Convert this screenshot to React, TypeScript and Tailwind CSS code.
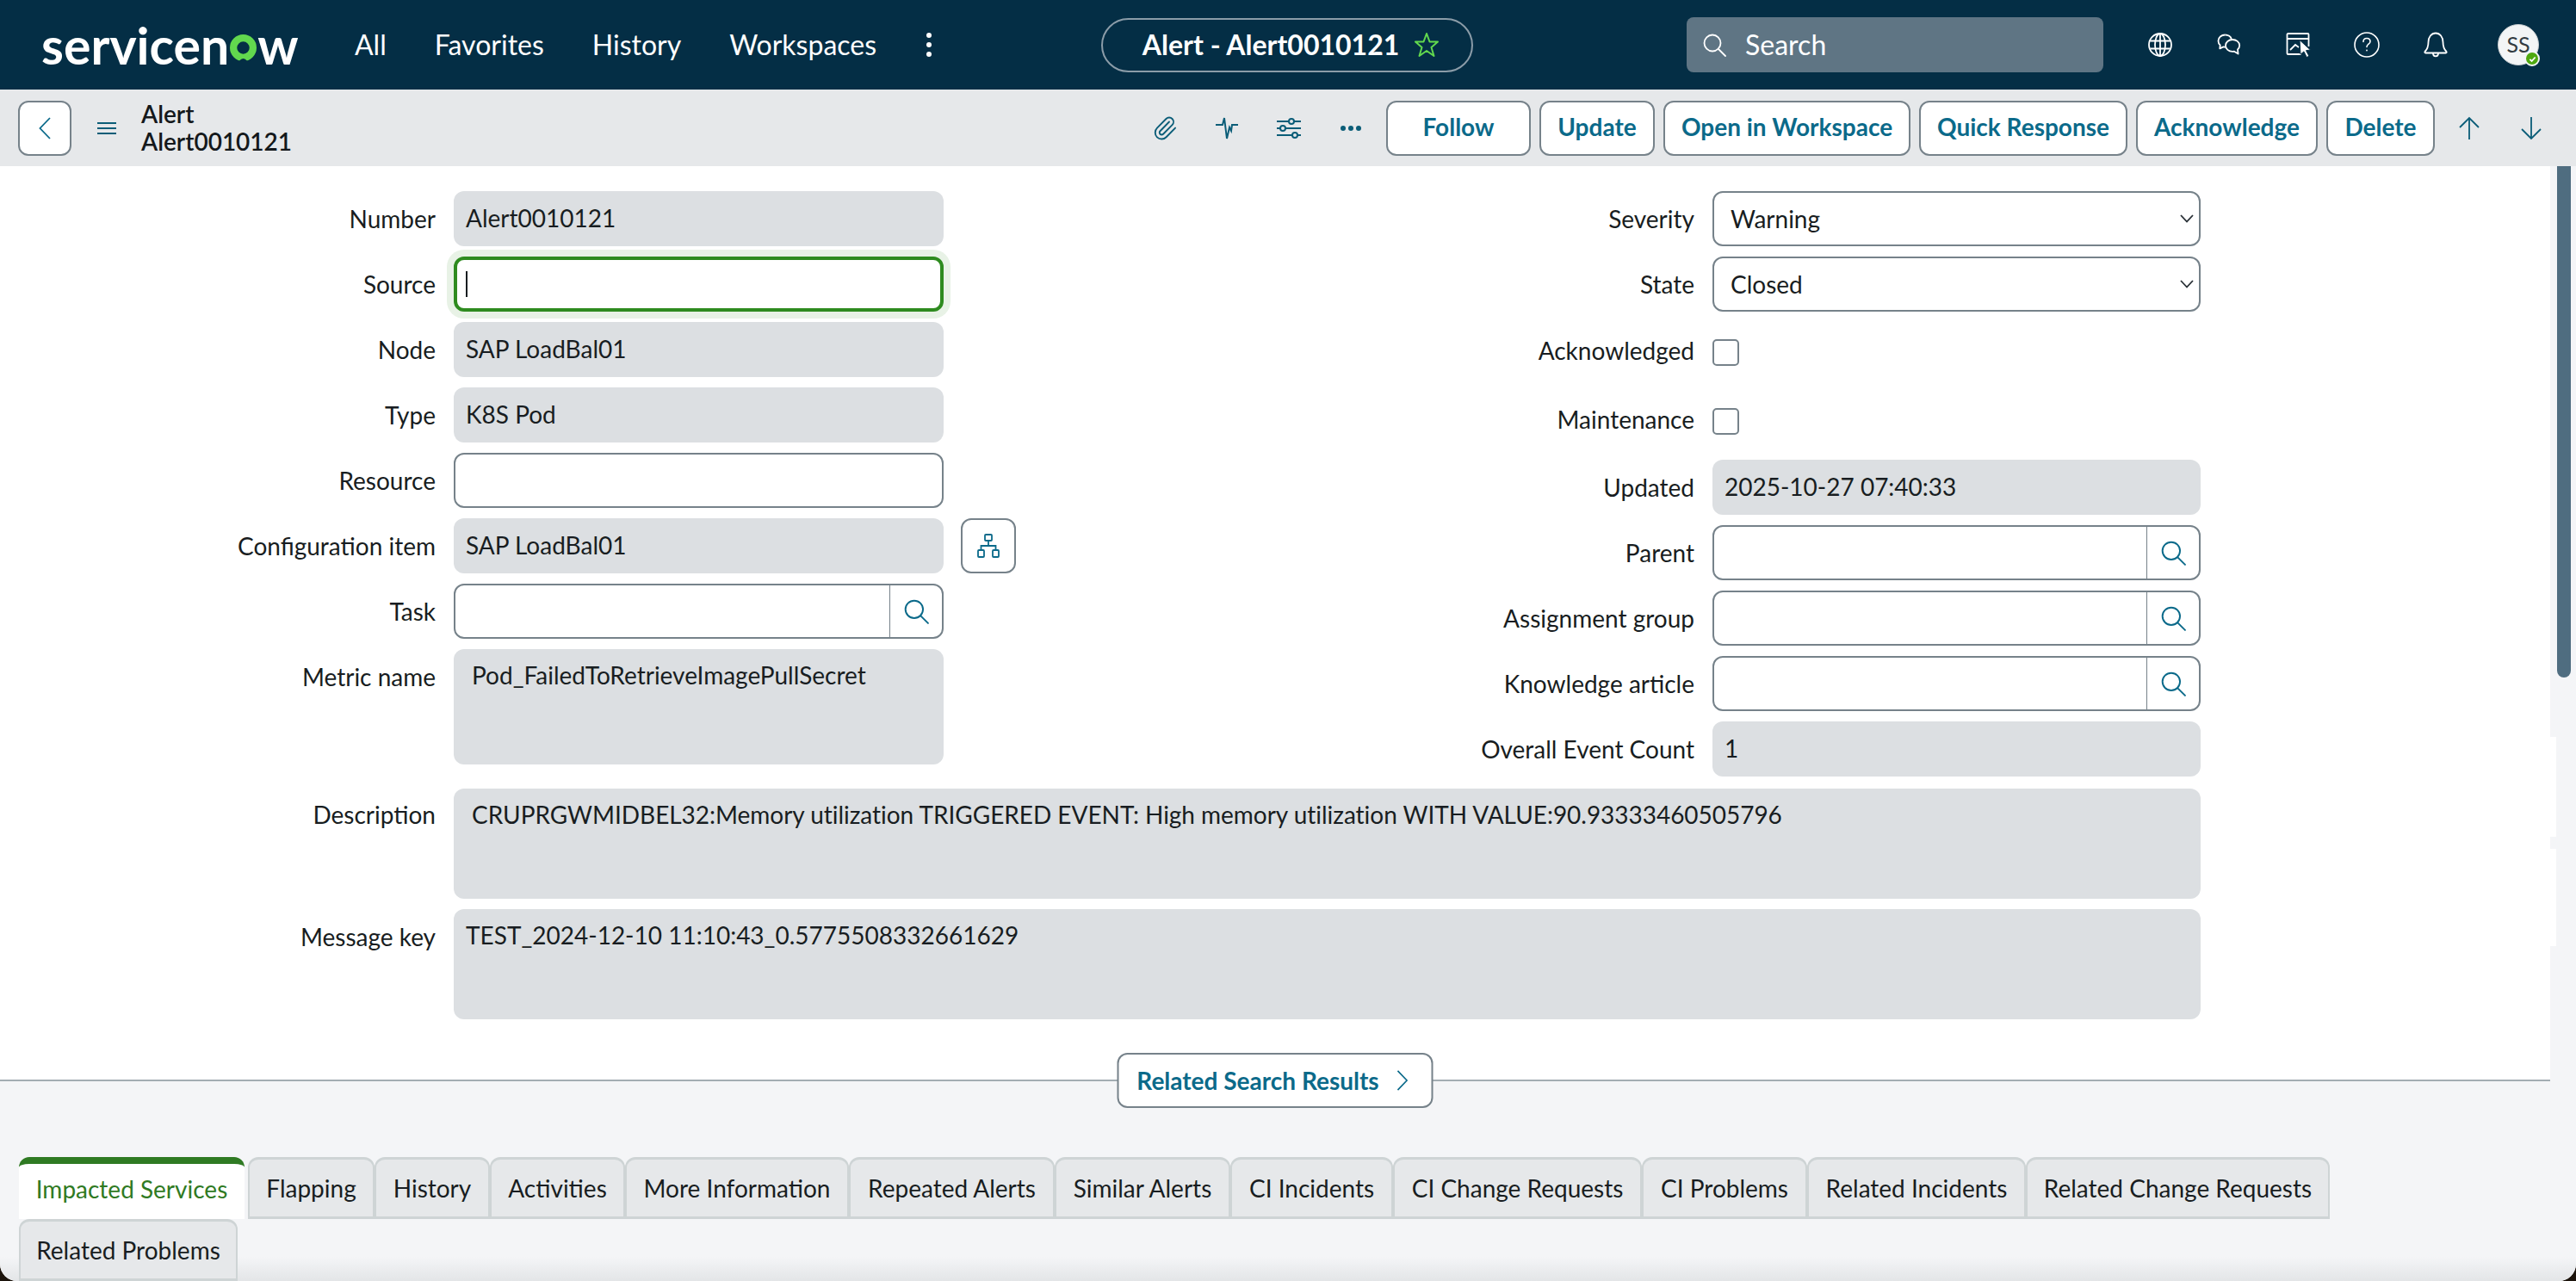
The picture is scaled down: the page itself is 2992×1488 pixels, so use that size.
import React from "react";
import { Paperclip } from "lucide-react";

const NAV = ["All", "Favorites", "History", "Workspaces"];

const ACTIONS = [
  { label: "Follow", width: "w-[168px]" },
  { label: "Update", width: "w-[134px]" },
  { label: "Open in Workspace", width: "w-[287px]" },
  { label: "Quick Response", width: "w-[242px]" },
  { label: "Acknowledge", width: "w-[211px]" },
  { label: "Delete", width: "w-[126px]" },
];

const TABS = [
  { label: "Impacted Services", width: "w-[262px]", active: true },
  { label: "Flapping", width: "w-[147px]" },
  { label: "History", width: "w-[134px]" },
  { label: "Activities", width: "w-[157px]" },
  { label: "More Information", width: "w-[260px]" },
  { label: "Repeated Alerts", width: "w-[239px]" },
  { label: "Similar Alerts", width: "w-[204px]" },
  { label: "CI Incidents", width: "w-[189px]" },
  { label: "CI Change Requests", width: "w-[289px]" },
  { label: "CI Problems", width: "w-[192px]" },
  { label: "Related Incidents", width: "w-[254px]" },
  { label: "Related Change Requests", width: "w-[353px]" },
  { label: "Related Problems", width: "w-[254px]" },
];

const SearchIcon = ({ className = "" }: { className?: string }) => (
  <svg viewBox="0 0 28 28" fill="none" stroke="currentColor" strokeWidth="1.8" className={className}>
    <circle cx="12" cy="12" r="9.5" />
    <path d="M19 19l8 8" strokeLinecap="round" />
  </svg>
);

const Logo = () => (
  <div className="flex items-center text-[59px] font-bold leading-none text-white">
    <span>servicen</span>
    <svg viewBox="0 0 30 30" className="mx-[1px] mt-[6px] h-[31px] w-[31px]">
      <circle cx="15" cy="15" r="11" fill="none" stroke="#62d84e" strokeWidth="8" />
      <path d="M10 30.5Q15 23.5 20 30.5z" fill="#042e45" />
    </svg>
    <span>w</span>
  </div>
);

const HeaderIcons = () => (
  <div className="ml-[26px] flex items-center text-white">
    <div className="flex w-[80px] justify-center">
      <svg viewBox="0 0 28 28" fill="none" stroke="currentColor" strokeWidth="1.8" className="h-[28px] w-[28px]">
        <circle cx="14" cy="14" r="13" />
        <ellipse cx="14" cy="14" rx="6" ry="13" />
        <path d="M14 1v26M2.5 9.5h23M2.5 18.5h23" />
      </svg>
    </div>
    <div className="flex w-[80px] justify-center">
      <svg viewBox="0 0 28 26" fill="none" stroke="currentColor" strokeWidth="1.8" strokeLinejoin="round" className="h-[26px] w-[28px]">
        <path d="M9.5 1.5c-4.4 0-8 3-8 7 0 2 .8 3.6 2.2 4.9l-.4 4 4.2-2c1 .3 1.6.3 2.4.2" />
        <path d="M9.5 1.5c3.4 0 6.6 2 7.4 5" />
        <path d="M18 7c4.4 0 8.2 2.7 8.2 6.8 0 2-.8 3.6-2.2 4.7l.6 5-4.6-2.8c-.6.1-1.3.2-2 .2-4.4 0-8-3-8-7 0-4 3.6-6.9 8-6.9z" />
      </svg>
    </div>
    <div className="flex w-[80px] justify-center">
      <svg viewBox="0 0 30 30" fill="none" stroke="currentColor" strokeWidth="1.8" className="ml-[2px] h-[30px] w-[30px]">
        <path d="M18 26H2.5a1 1 0 0 1-1-1V3a1 1 0 0 1 1-1h23a1 1 0 0 1 1 1v14" />
        <path d="M1.5 8h25M5 21l6-6 4 3" />
        <path d="M16 9.5l12.5 11.5-5 .7 3.5 6.5-2.8 1.3-3.3-6.6-3.9 3.4z" fill="#fff" stroke="#042e45" strokeWidth="1" />
      </svg>
    </div>
    <div className="flex w-[80px] justify-center">
      <svg viewBox="0 0 30 30" fill="none" stroke="currentColor" strokeWidth="1.6" className="h-[30px] w-[30px]">
        <circle cx="15" cy="15" r="14" />
        <path d="M11 11.5c0-2.5 1.8-4 4-4s4 1.500 4 3.700c0 3-4 3-4 6.300" strokeLinecap="round" />
        <circle cx="15" cy="21.500" r="0.900" fill="currentColor" stroke="none" />
      </svg>
    </div>
    <div className="flex w-[80px] justify-center">
      <svg viewBox="0 0 28 30" fill="none" stroke="currentColor" strokeWidth="1.8" strokeLinejoin="round" className="h-[30px] w-[28px]">
        <path d="M5.500 12c0-6 3.500-10.500 8.500-10.500S22.500 6 22.500 12c0 5 1 8 4 11 .5.600.2 1.500-.7 1.500H2.200c-.9 0-1.200-.9-.7-1.500 3-3 4-6 4-11z" />
        <path d="M11 25c0 2 1.300 3.300 3 3.300s3-1.300 3-3.300" />
      </svg>
    </div>
    <div className="relative ml-[32px] flex h-[48px] w-[48px] items-center justify-center rounded-full border border-[#c9ced1] bg-[#f3f5f6] text-[25px] text-[#333c42]">
      SS
      <div className="absolute bottom-[-2px] right-[-2px] flex h-[18px] w-[18px] items-center justify-center rounded-full border-2 border-[#f3f5f6] bg-[#4ea80f]">
        <svg viewBox="0 0 10 10" fill="none" stroke="#fff" strokeWidth="2" className="h-[9px] w-[9px]">
          <path d="M1.500 5.500l2.500 2.300 4.500-5" />
        </svg>
      </div>
    </div>
  </div>
);

const Header = () => (
  <header className="flex h-[104px] shrink-0 items-center bg-[#042e45] pl-[48px] text-white">
    <div className="w-[364px]">
      <Logo />
    </div>
    <nav className="flex items-center gap-[56px] text-[32px]">
      {NAV.map((item) => (
        <span key={item}>{item}</span>
      ))}
    </nav>
    <div className="ml-[53px] flex w-[16px] flex-col items-center gap-[5px]">
      <span className="h-[6px] w-[6px] rounded-full bg-white" />
      <span className="h-[6px] w-[6px] rounded-full bg-white" />
      <span className="h-[6px] w-[6px] rounded-full bg-white" />
    </div>
    <div className="ml-[192px] flex h-[63px] w-[432px] items-center justify-center gap-[18px] rounded-full border-2 border-[#8b9ca8] pl-[8px] text-[32px] font-bold">
      <span>Alert - Alert0010121</span>
      <svg viewBox="0 0 28 30" fill="none" stroke="#62d84e" strokeWidth="2" strokeLinejoin="round" className="h-[30px] w-[28px]">
        <path d="M14 2l3.500 9.500H27l-7.500 6.500L22.500 28 14 22l-8.500 6L8.500 18 1 11.500h9.500z" />
      </svg>
    </div>
    <div className="ml-[248px] flex h-[64px] w-[484px] items-center gap-[22px] rounded-lg bg-[#5f7584] pl-[18px] text-[32px]">
      <SearchIcon className="h-[28px] w-[28px]" />
      <span>Search</span>
    </div>
    <HeaderIcons />
  </header>
);

const ToolIcon = ({ children }: { children: React.ReactNode }) => (
  <div className="flex w-[72px] items-center justify-center text-[#0b5d78]">{children}</div>
);

const Toolbar = () => (
  <div className="flex h-[89px] shrink-0 items-center bg-[#e6e8ea] pl-[21px] pr-[16px]">
    <button className="flex h-[64px] w-[62px] items-center justify-center rounded-xl border-2 border-[#76828a] bg-white text-[#0b6a8a]">
      <svg viewBox="0 0 14 26" fill="none" stroke="currentColor" strokeWidth="1.8" className="h-[26px] w-[14px]">
        <path d="M13 1L1.500 13 13 25" />
      </svg>
    </button>
    <div className="ml-[30px] flex w-[22px] flex-col gap-[4px]">
      <span className="h-[2px] bg-[#0b5d78]" />
      <span className="h-[2px] bg-[#0b5d78]" />
      <span className="h-[2px] bg-[#0b5d78]" />
    </div>
    <div className="ml-[29px] pb-[2px] text-[28px] font-semibold leading-[32px] text-[#14181b]">
      <div>Alert</div>
      <div>Alert0010121</div>
    </div>
    <div className="ml-auto flex items-center">
      <ToolIcon>
        <Paperclip size={30} strokeWidth={1.5} />
      </ToolIcon>
      <ToolIcon>
        <svg viewBox="0 0 28 28" fill="none" stroke="currentColor" strokeWidth="2" className="h-[28px] w-[28px]">
          <path d="M1 10h8l2-8 3 24 3-13 2 4 1-7h7" />
        </svg>
      </ToolIcon>
      <ToolIcon>
        <svg viewBox="0 0 28 28" fill="none" stroke="currentColor" strokeWidth="2" className="h-[28px] w-[28px]">
          <path d="M0 6h14M20 6h8M0 14h4M10 14h18M0 22h18M24 22h4" />
          <circle cx="17" cy="6" r="3" />
          <circle cx="7" cy="14" r="3" />
          <circle cx="21" cy="22" r="3" />
        </svg>
      </ToolIcon>
      <ToolIcon>
        <svg viewBox="0 0 24 6" fill="currentColor" className="h-[6px] w-[24px]">
          <circle cx="3" cy="3" r="3" />
          <circle cx="12" cy="3" r="3" />
          <circle cx="21" cy="3" r="3" />
        </svg>
      </ToolIcon>
      <div className="ml-[5px] flex items-center gap-[10px]">
        {ACTIONS.map((action) => (
          <button
            key={action.label}
            className={`h-[64px] ${action.width} rounded-xl border-2 border-[#76828a] bg-white pb-[3px] text-[28px] font-bold text-[#0b6a8a]`}
          >
            {action.label}
          </button>
        ))}
      </div>
      <div className="ml-[4px] flex">
        <ToolIcon>
          <svg viewBox="0 0 26 28" fill="none" stroke="currentColor" strokeWidth="1.8" className="h-[28px] w-[26px]">
            <path d="M13 27V2M2 13L13 2l11 11" />
          </svg>
        </ToolIcon>
        <ToolIcon>
          <svg viewBox="0 0 26 28" fill="none" stroke="currentColor" strokeWidth="1.8" className="h-[28px] w-[26px]">
            <path d="M13 1v25M2 15l11 11 11-11" />
          </svg>
        </ToolIcon>
      </div>
    </div>
  </div>
);

const Label = ({ text, className = "w-[506px]" }: { text: string; className?: string }) => (
  <label className={`${className} shrink-0 text-right text-[28px] leading-[64px] text-[#181d21]`}>{text}</label>
);

const ReadOnly = ({ value, className = "w-[569px] h-16" }: { value: string; className?: string }) => (
  <div className={`${className} rounded-xl bg-[#dcdfe2] px-[14px] text-[28px] leading-[62px] text-[#181d21]`}>{value}</div>
);

const TextInput = () => (
  <input readOnly className="h-16 w-[569px] rounded-xl border-2 border-[#76828a] bg-white px-[14px] outline-none" />
);

const Lookup = ({ className }: { className: string }) => (
  <div className={`${className} flex h-16 overflow-hidden rounded-xl border-2 border-[#76828a] bg-white`}>
    <input readOnly className="min-w-0 flex-1 outline-none" />
    <div className="flex w-[61px] items-center justify-center border-l border-[#76828a] text-[#0b6a8a]">
      <SearchIcon className="h-[30px] w-[30px]" />
    </div>
  </div>
);

const SelectField = ({ value }: { value: string }) => (
  <div className="relative h-16 w-[567px]">
    <select
      defaultValue={value}
      className="h-full w-full appearance-none rounded-xl border-2 border-[#76828a] bg-white pl-[19px] text-[28px] text-[#181d21] outline-none"
    >
      <option>{value}</option>
    </select>
    <svg viewBox="0 0 16 10" fill="none" stroke="#2a3137" strokeWidth="1.8" className="absolute right-[8px] top-[27px] h-[10px] w-[16px]">
      <path d="M1 1l7 7.500L15 1" />
    </svg>
  </div>
);

const Checkbox = () => <span className="mt-[2px] block h-[31px] w-[31px] rounded-[5px] border-2 border-[#76828a] bg-white" />;

const Row = ({ children }: { children: React.ReactNode }) => <div className="flex items-start gap-[21px]">{children}</div>;

const RightRow = ({ text, children }: { text: string; children: React.ReactNode }) => (
  <div className="flex items-start gap-[21px]">
    <Label text={text} className="w-[768px]" />
    {children}
  </div>
);

const CheckRow = ({ text }: { text: string }) => (
  <div className="flex h-[68px] items-center gap-[21px]">
    <label className="w-[768px] shrink-0 pb-[3px] text-right text-[28px] text-[#181d21]">{text}</label>
    <Checkbox />
  </div>
);

const Form = () => (
  <div className="pt-[29px]">
    <div className="flex">
      <div className="flex w-[1200px] shrink-0 flex-col gap-[12px]">
        <Row>
          <Label text="Number" />
          <ReadOnly value="Alert0010121" />
        </Row>
        <Row>
          <Label text="Source" />
          <div className="flex h-16 w-[569px] items-center rounded-xl border-4 border-[#2e8b1f] bg-white pl-[10px] ring-[8px] ring-[#e8f2e6]">
            <span className="h-[30px] w-[2px] bg-[#181d21]" />
          </div>
        </Row>
        <Row>
          <Label text="Node" />
          <ReadOnly value="SAP LoadBal01" />
        </Row>
        <Row>
          <Label text="Type" />
          <ReadOnly value="K8S Pod" />
        </Row>
        <Row>
          <Label text="Resource" />
          <TextInput />
        </Row>
        <Row>
          <Label text="Configuration item" />
          <ReadOnly value="SAP LoadBal01" />
          <button className="-ml-px flex h-16 w-[64px] items-center justify-center rounded-xl border-2 border-[#76828a] bg-white text-[#0b6a8a]">
            <svg viewBox="0 0 28 28" fill="none" stroke="currentColor" strokeWidth="1.8" className="h-[28px] w-[28px]">
              <rect x="10" y="1" width="8" height="7" rx="1" />
              <rect x="2" y="19" width="7" height="8" rx="1" />
              <rect x="19" y="19" width="7" height="8" rx="1" />
              <path d="M14 8v6M5.500 19v-5h17v5" />
            </svg>
          </button>
        </Row>
        <Row>
          <Label text="Task" />
          <Lookup className="w-[569px]" />
        </Row>
        <Row>
          <Label text="Metric name" />
          <div className="h-[134px] w-[569px] rounded-xl bg-[#dcdfe2] px-[21px] text-[28px] leading-[60px] text-[#181d21]">
            Pod_FailedToRetrieveImagePullSecret
          </div>
        </Row>
      </div>
      <div className="flex flex-col gap-[12px]">
        <RightRow text="Severity">
          <SelectField value="Warning" />
        </RightRow>
        <RightRow text="State">
          <SelectField value="Closed" />
        </RightRow>
        <CheckRow text="Acknowledged" />
        <CheckRow text="Maintenance" />
        <RightRow text="Updated">
          <ReadOnly value="2025-10-27 07:40:33" className="h-16 w-[567px]" />
        </RightRow>
        <RightRow text="Parent">
          <Lookup className="w-[567px]" />
        </RightRow>
        <RightRow text="Assignment group">
          <Lookup className="w-[567px]" />
        </RightRow>
        <RightRow text="Knowledge article">
          <Lookup className="w-[567px]" />
        </RightRow>
        <RightRow text="Overall Event Count">
          <ReadOnly value="1" className="h-16 w-[567px]" />
        </RightRow>
      </div>
    </div>
    <div className="mt-[14px] flex flex-col gap-[12px]">
      <Row>
        <label className="w-[506px] shrink-0 text-right text-[28px] leading-[60px] text-[#181d21]">Description</label>
        <div className="h-[128px] w-[2029px] rounded-xl bg-[#dcdfe2] px-[21px] text-[28px] leading-[60px] tracking-[-0.03px] text-[#181d21]">
          CRUPRGWMIDBEL32:Memory utilization TRIGGERED EVENT: High memory utilization WITH VALUE:90.93333460505796
        </div>
      </Row>
      <Row>
        <Label text="Message key" />
        <div className="h-[128px] w-[2029px] rounded-xl bg-[#dcdfe2] px-[14px] text-[28px] leading-[60px] text-[#181d21]">
          TEST_2024-12-10 11:10:43_0.5775508332661629
        </div>
      </Row>
    </div>
  </div>
);

const Scrollbar = () => (
  <div className="relative w-[30px] shrink-0 bg-[#f4f5f7]">
    <div className="ml-[8px] h-[594px] w-[16px] rounded-b-lg bg-[#4f6d80]" />
    <div className="absolute left-0 top-[663px] h-[116px] w-[7px] bg-white" />
    <div className="absolute left-0 top-[793px] h-[113px] w-[7px] bg-white" />
  </div>
);

const Tabs = () => (
  <div className="flex flex-1 flex-col bg-[linear-gradient(to_bottom,#f4f5f7_88%,#e3e5e7_100%)] pl-[22px] pt-[88px]">
    <div className="flex w-[2700px] flex-wrap">
      {TABS.map((tab) => (
        <div
          key={tab.label}
          className={`flex h-[72px] ${tab.width} items-center justify-center rounded-t-xl text-[28px] ${
            tab.active
              ? "mr-[4px] border-t-[8px] border-[#2f7a23] bg-white pb-[6px] text-[#2f7a23]"
              : "border-2 border-t-[3px] border-b-[3px] border-[#ced4d5] bg-[#e6e8ea] text-[#181d21]"
          }`}
        >
          {tab.label}
        </div>
      ))}
    </div>
  </div>
);

export default function App() {
  return (
    <div className="h-[1488px] w-[2992px] overflow-hidden bg-[#1c140c] font-['Lato',sans-serif]">
      <div className="flex h-full flex-col overflow-hidden rounded-b-[20px] bg-white">
        <Header />
        <Toolbar />
        <div className="flex h-[1063px] shrink-0">
          <div className="relative flex-1 border-b-2 border-[#a3adb3] bg-white">
            <Form />
            <button className="absolute bottom-[-33px] left-1/2 flex h-16 w-[367px] -translate-x-1/2 items-center justify-center gap-[21px] rounded-xl border-2 border-[#76828a] bg-white pr-[6px] text-[28px] font-bold text-[#0b6a8a]">
              <span>Related Search Results</span>
              <svg viewBox="0 0 14 26" fill="none" stroke="currentColor" strokeWidth="1.8" className="h-[24px] w-[13px]">
                <path d="M1 1l11.500 12L1 25" />
              </svg>
            </button>
          </div>
          <Scrollbar />
        </div>
        <Tabs />
      </div>
    </div>
  );
}
